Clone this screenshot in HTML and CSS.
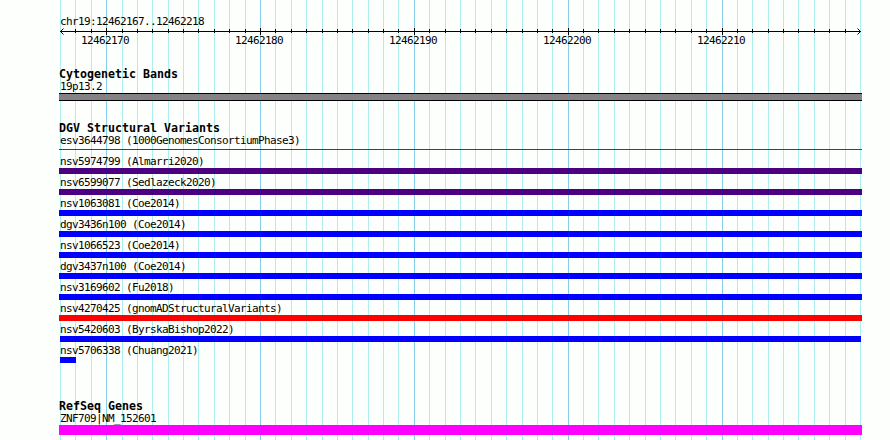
FILE: index.html
```
<!DOCTYPE html>
<html lang="en">
<head>
    <meta charset="UTF-8">
    <title>chr19:12462167..12462218</title>
    <link rel="stylesheet" href="styles.css">
</head>
<body>
    <div class="browser">
        <svg class="grid" id="grid" width="890" height="440" shape-rendering="crispEdges"></svg>

        <div class="tracks">
            <div class="scale">
                <div class="label">chr19:12462167..12462218</div>
                <svg class="ruler" id="ruler" width="803" height="24"></svg>
            </div>

            <div class="track cyto">
                <h2>Cytogenetic Bands</h2>
                <div class="label">19p13.2</div>
                <div class="bar band"></div>
            </div>

            <div class="track variants">
                <h2>DGV Structural Variants</h2>
                <div class="feature"><div class="label">esv3644798 (1000GenomesConsortiumPhase3)</div><div class="bar thin"></div></div>
                <div class="feature"><div class="label">nsv5974799 (Almarri2020)</div><div class="bar indigo"></div></div>
                <div class="feature"><div class="label">nsv6599077 (Sedlazeck2020)</div><div class="bar indigo"></div></div>
                <div class="feature"><div class="label">nsv1063081 (Coe2014)</div><div class="bar blue"></div></div>
                <div class="feature"><div class="label">dgv3436n100 (Coe2014)</div><div class="bar blue"></div></div>
                <div class="feature"><div class="label">nsv1066523 (Coe2014)</div><div class="bar blue"></div></div>
                <div class="feature"><div class="label">dgv3437n100 (Coe2014)</div><div class="bar blue"></div></div>
                <div class="feature"><div class="label">nsv3169602 (Fu2018)</div><div class="bar blue"></div></div>
                <div class="feature"><div class="label">nsv4270425 (gnomADStructuralVariants)</div><div class="bar red"></div></div>
                <div class="feature"><div class="label">nsv5420603 (ByrskaBishop2022)</div><div class="bar blue inset"></div></div>
                <div class="feature"><div class="label">nsv5706338 (Chuang2021)</div><div class="bar blue short"></div></div>
            </div>

            <div class="track genes">
                <h2>RefSeq Genes</h2>
                <div class="label">ZNF709|NM_152601</div>
                <div class="bar gene"></div>
            </div>
        </div>
    </div>

    <script>
        const start = 12462167;
        const bases = 52;
        const left = 60;
        const step = 800 / bases;

        let lines = '';
        let ticks = '<path d="M1 7.5H802" />';
        let numbers = '';

        for (let i = 0; i <= bases; i++) {
            const x = Math.round(left + i * step);
            const major = (start + i) % 10 === 0;
            lines += `<rect class="${major ? 'major' : 'minor'}" x="${x}" y="0" width="1" height="440" />`;

            // ruler starts one pixel left of the first base
            const rx = x - left + 1.5;
            if (i > 0 && i < bases) {
                ticks += major ? `<path d="M${rx} 4V11" />` : `<path d="M${rx} 5V9" />`;
            }
            if (major) {
                numbers += `<text x="${rx - 25.5}" y="20">${start + i}</text>`;
            }
        }

        document.getElementById('grid').innerHTML = lines;
        document.getElementById('ruler').innerHTML =
            `<g shape-rendering="crispEdges">${ticks}</g>` +
            '<path d="M4.5 4.5L1.5 7.5L4.5 10.5M798.5 4.5L801.5 7.5L798.5 10.5" />' + numbers;
    </script>
</body>
</html>
```
FILE: styles.css
```
body {
    margin: 0;
    background: #fdfffc;
    color: #000;
    font-family: "DejaVu Sans Mono", monospace;
    font-size: 11px;
    letter-spacing: -0.62px;
}

.browser {
    position: relative;
    width: 890px;
    height: 440px;
    overflow: hidden;
}

.grid {
    position: absolute;
    top: 0;
    left: 0;
}

.minor {
    fill: #afeeee;
}

.major {
    fill: #87ceeb;
}

.tracks {
    position: relative;
    width: 803px;
    padding: 15px 0 0 59px;
}

.label {
    height: 12px;
    padding-left: 1px;
    line-height: 13px;
    white-space: pre;
}

.scale {
    height: 53px;
}

.ruler {
    display: block;
    margin-top: -3px;
}

.ruler path {
    fill: none;
    stroke: #000;
    stroke-width: 1;
}

h2 {
    height: 12px;
    margin: 0;
    font-size: 11.63px;
    line-height: 12px;
    letter-spacing: 0;
}

.cyto {
    height: 54px;
}

.variants {
    height: 278px;
}

.feature {
    height: 21px;
}

.bar {
    height: 6px;
    margin-top: 1px;
}

.band {
    box-sizing: border-box;
    height: 8px;
    background: #848284;
    border: solid #000;
    border-width: 1px 0;
}

.thin {
    height: 1px;
    margin-top: 3px;
    background: #e00000;
}

.indigo {
    background: #4b0082;
}

.blue {
    background: #0000ff;
}

.red {
    background: #ff0000;
}

.inset {
    margin-left: 1px;
    margin-right: 1px;
}

.short {
    width: 16px;
    margin-left: 1px;
}

.gene {
    height: 10px;
    background: #ff00ff;
}
```
